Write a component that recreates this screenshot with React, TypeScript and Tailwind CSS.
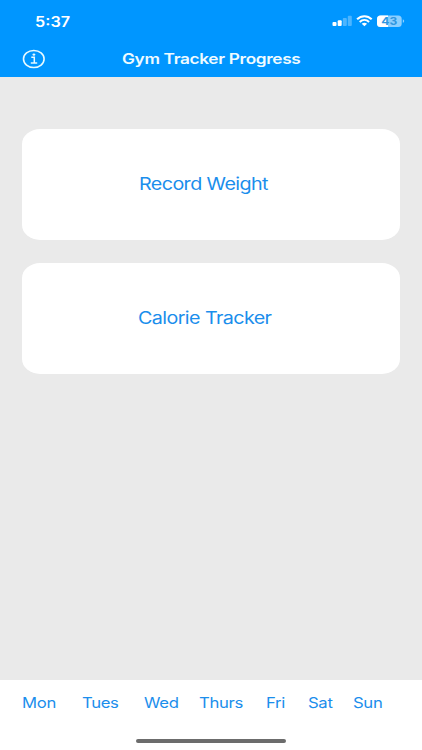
const days = [
  { label: "Mon", box: "w-[60px]" },
  { label: "Tues", box: "w-[62px]" },
  { label: "Wed", box: "w-[54.5px]" },
  { label: "Thurs", box: "w-[67px]" },
  { label: "Fri", box: "w-[42px]" },
  { label: "Sat", box: "w-[45.5px]" },
  { label: "Sun", box: "w-[40px]" },
];

function StatusIcons() {
  return (
    <svg width="76" height="16" viewBox="0 0 76 16" fill="none">
      <rect x="2.5" y="9" width="4" height="4" rx="1" fill="#fff" />
      <rect x="7.7" y="7.3" width="4" height="5.7" rx="1" fill="#fff" />
      <rect x="12.8" y="5" width="4" height="8" rx="1" fill="#fff" fillOpacity="0.3" />
      <rect x="17.8" y="2.8" width="4" height="10.2" rx="1" fill="#fff" fillOpacity="0.3" />
      <path d="M27.1 6.3C31.3 2.2 37.5 2.2 41.7 6.3" stroke="#fff" strokeWidth="2.1" />
      <path d="M29.7 9C32.5 6.4 36.3 6.4 39.1 9" stroke="#fff" strokeWidth="2" />
      <path d="M31.7 10.8C33.4 9.4 35.4 9.4 37.1 10.8L34.4 13.3Z" fill="#fff" />
      <rect x="47" y="2.4" width="24.7" height="11.6" rx="3.5" fill="#fff" fillOpacity="0.55" />
      <path d="M50.5 2.4H58V14H50.5A3.5 3.5 0 0 1 47 10.5V5.9A3.5 3.5 0 0 1 50.5 2.4Z" fill="#fff" />
      <path d="M72.8 6.2Q74.2 6.6 74.2 8Q74.2 9.4 72.8 9.8Z" fill="#fff" fillOpacity="0.55" />
      <text x="51.3" y="12" textLength="16" lengthAdjust="spacingAndGlyphs" fill="#2f96e0" className="font-['Inter',sans-serif] text-[10.5px] font-bold">
        43
      </text>
    </svg>
  );
}

function InfoIcon() {
  return (
    <svg width="24" height="20" viewBox="0 0 24 20" fill="none" stroke="#e8faff" strokeWidth="1.6">
      <ellipse cx="11.8" cy="10" rx="10.3" ry="8.5" />
      <path d="M9.3 8.3H12.3V13.8M8.8 14H15.2" strokeWidth="1.5" />
      <ellipse cx="11.9" cy="5.6" rx="1.4" ry="1.2" fill="#e8faff" stroke="none" />
    </svg>
  );
}

function Card({ label, indent }: { label: string; indent: string }) {
  return (
    <button className={`flex h-[111px] w-full items-center rounded-[18px/15px] bg-white pt-[1px] text-left ${indent}`}>
      <span className="origin-left scale-x-[1.16] text-[17px] tracking-[-0.03em] whitespace-nowrap">{label}</span>
    </button>
  );
}

export default function App() {
  return (
    <div className="flex h-[750px] w-[422px] flex-col overflow-hidden bg-[#eaeaea] font-['Inter','Liberation_Sans',sans-serif] text-[#1b8eec]">
      <header className="h-[77px] bg-[#0096ff] text-white">
        <div className="flex h-[42px] items-center justify-between pr-[16px] pl-[35px]">
          <span className="origin-left scale-x-[1.16] text-[14px] font-semibold">5:37</span>
          <StatusIcons />
        </div>
        <div className="flex h-[34px] items-center pl-[22px]">
          <InfoIcon />
          <h1 className="ml-[75.5px] origin-left scale-x-[1.19] text-[14.5px] font-semibold tracking-[-0.02em] whitespace-nowrap text-[#effbff]">
            Gym Tracker Progress
          </h1>
        </div>
      </header>

      <main className="flex flex-1 flex-col gap-[23.5px] px-[22px] pt-[51.5px]">
        <Card label="Record Weight" indent="pl-[116.5px]" />
        <Card label="Calorie Tracker" indent="pl-[115.5px]" />
      </main>

      <footer className="flex h-[70px] flex-col bg-white">
        <nav className="flex h-[44px] items-center pl-[22px]">
          {days.map((day) => (
            <a key={day.label} className={`shrink-0 ${day.box}`}>
              <span className="inline-block origin-left scale-x-[1.15] text-[14.5px] tracking-[-0.02em]">{day.label}</span>
            </a>
          ))}
        </nav>
        <div className="mt-[15px] ml-[136px] h-1 w-[150px] rounded-full bg-[#6c6c6c]" />
      </footer>
    </div>
  );
}
